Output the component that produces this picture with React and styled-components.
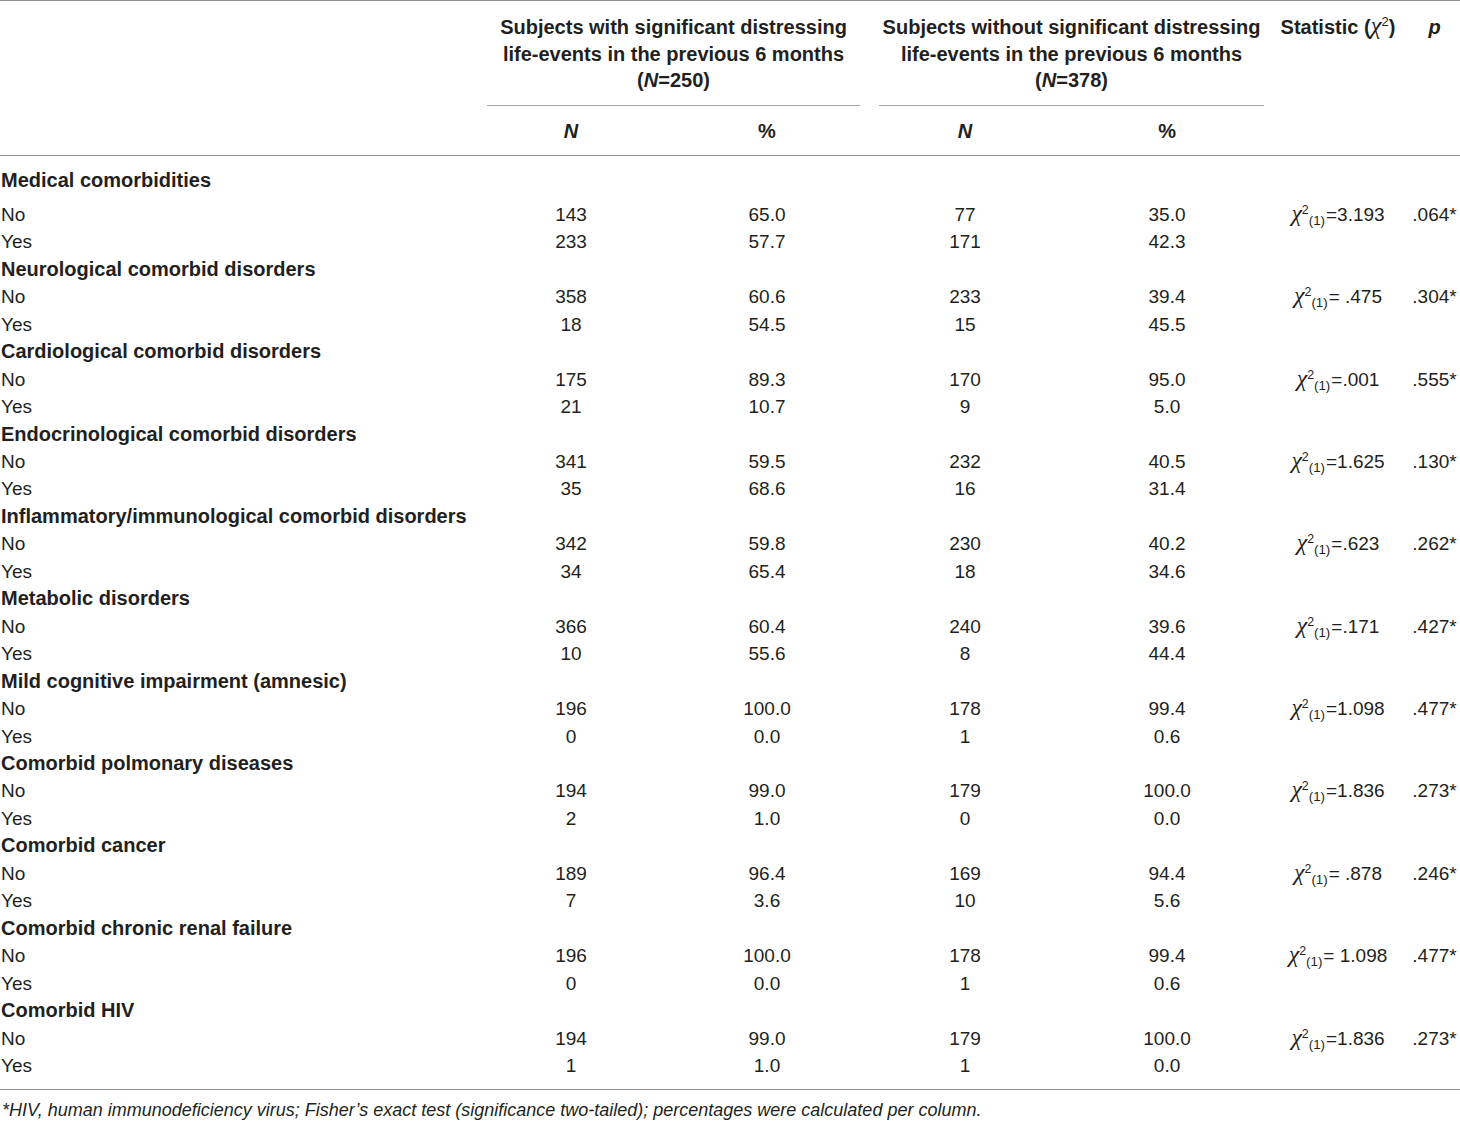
import React from 'react';
import styled, { createGlobalStyle } from 'styled-components';

const GlobalStyle = createGlobalStyle`
  body {
    margin: 0;
    background: #fff;
    font-family: "Liberation Sans", Arial, sans-serif;
    color: #231f20;
  }
`;

const groups = [
  {
    title: 'Medical comorbidities',
    no: ['143', '65.0', '77', '35.0'],
    yes: ['233', '57.7', '171', '42.3'],
    stat: '=3.193',
    p: '.064*',
  },
  {
    title: 'Neurological comorbid disorders',
    no: ['358', '60.6', '233', '39.4'],
    yes: ['18', '54.5', '15', '45.5'],
    stat: '= .475',
    p: '.304*',
  },
  {
    title: 'Cardiological comorbid disorders',
    no: ['175', '89.3', '170', '95.0'],
    yes: ['21', '10.7', '9', '5.0'],
    stat: '=.001',
    p: '.555*',
  },
  {
    title: 'Endocrinological comorbid disorders',
    no: ['341', '59.5', '232', '40.5'],
    yes: ['35', '68.6', '16', '31.4'],
    stat: '=1.625',
    p: '.130*',
  },
  {
    title: 'Inflammatory/immunological comorbid disorders',
    no: ['342', '59.8', '230', '40.2'],
    yes: ['34', '65.4', '18', '34.6'],
    stat: '=.623',
    p: '.262*',
  },
  {
    title: 'Metabolic disorders',
    no: ['366', '60.4', '240', '39.6'],
    yes: ['10', '55.6', '8', '44.4'],
    stat: '=.171',
    p: '.427*',
  },
  {
    title: 'Mild cognitive impairment (amnesic)',
    no: ['196', '100.0', '178', '99.4'],
    yes: ['0', '0.0', '1', '0.6'],
    stat: '=1.098',
    p: '.477*',
  },
  {
    title: 'Comorbid polmonary diseases',
    no: ['194', '99.0', '179', '100.0'],
    yes: ['2', '1.0', '0', '0.0'],
    stat: '=1.836',
    p: '.273*',
  },
  {
    title: 'Comorbid cancer',
    no: ['189', '96.4', '169', '94.4'],
    yes: ['7', '3.6', '10', '5.6'],
    stat: '= .878',
    p: '.246*',
  },
  {
    title: 'Comorbid chronic renal failure',
    no: ['196', '100.0', '178', '99.4'],
    yes: ['0', '0.0', '1', '0.6'],
    stat: '= 1.098',
    p: '.477*',
  },
  {
    title: 'Comorbid HIV',
    no: ['194', '99.0', '179', '100.0'],
    yes: ['1', '1.0', '1', '0.0'],
    stat: '=1.836',
    p: '.273*',
  },
];

const Chi = ({ value }) => (
  <>
    <ChiGlyph>χ</ChiGlyph>
    <Sup>2</Sup>
    {value !== undefined && (
      <>
        <Sub>(1)</Sub>
        {value}
      </>
    )}
  </>
);

const App = () => (
  <Page>
    <GlobalStyle />
    <Table>
      <colgroup>
        <col style={{ width: 479 }} />
        <col style={{ width: 184 }} />
        <col style={{ width: 208 }} />
        <col style={{ width: 188 }} />
        <col style={{ width: 216 }} />
        <col style={{ width: 126 }} />
        <col style={{ width: 59 }} />
      </colgroup>
      <Head>
        <tr>
          <HeadCell rowSpan={2} />
          <GroupHead colSpan={2}>
            <GroupTitle>
              Subjects with significant distressing
              <br />
              life-events in the previous 6 months
              <br />
              (<i>N</i>=250)
            </GroupTitle>
          </GroupHead>
          <GroupHead colSpan={2}>
            <GroupTitle>
              Subjects without significant distressing
              <br />
              life-events in the previous 6 months
              <br />
              (<i>N</i>=378)
            </GroupTitle>
          </GroupHead>
          <HeadCell rowSpan={2}>
            Statistic (<Chi />)
          </HeadCell>
          <HeadCell rowSpan={2} $p>
            <i>p</i>
          </HeadCell>
        </tr>
        <tr>
          <SubHead><i>N</i></SubHead>
          <SubHead>%</SubHead>
          <SubHead><i>N</i></SubHead>
          <SubHead>%</SubHead>
        </tr>
      </Head>
      <Body>
        {groups.map((g, i) => (
          <React.Fragment key={g.title}>
            <tr>
              <Category colSpan={7} $first={i === 0}>{g.title}</Category>
            </tr>
            <tr>
              <Label>No</Label>
              {g.no.map((v, j) => (
                <Num key={j}>{v}</Num>
              ))}
              <Stat><Chi value={g.stat} /></Stat>
              <PValue>{g.p}</PValue>
            </tr>
            <tr>
              <Label $last={i === groups.length - 1}>Yes</Label>
              {g.yes.map((v, j) => (
                <Num key={j} $last={i === groups.length - 1}>{v}</Num>
              ))}
              <Stat $last={i === groups.length - 1} />
              <PValue $last={i === groups.length - 1} />
            </tr>
          </React.Fragment>
        ))}
      </Body>
    </Table>
    <Footnote>
      *HIV, human immunodeficiency virus; Fisher’s exact test (significance two-tailed); percentages were calculated per column.
    </Footnote>
  </Page>
);

// Styled components
const Page = styled.div`
  width: 1460px;
  font-family: "Liberation Sans", Arial, sans-serif;
  color: #231f20;
`;

const Table = styled.table`
  width: 1460px;
  table-layout: fixed;
  border-collapse: collapse;
  border-top: 1px solid #8f8f8f;
  font-size: 19px;
`;

const Head = styled.thead`
  border-bottom: 1px solid #8f8f8f;

  th {
    font-weight: bold;
    font-size: 20px;
    line-height: 26.5px;
  }
`;

const HeadCell = styled.th`
  vertical-align: top;
  padding: 13px 0 0 ${(p) => (p.$p ? '8px' : '0')};
  text-align: center;
  white-space: nowrap;
`;

const GroupHead = styled.th`
  padding: 13px 11px 0 8px;
  text-align: center;
  vertical-align: top;
`;

const GroupTitle = styled.div`
  padding-bottom: 11.5px;
  border-bottom: 1px solid #a6a6a6;
  white-space: nowrap;
`;

const SubHead = styled.th`
  padding: 12px 0 10.5px;
  text-align: center;
`;

const Body = styled.tbody`
  border-bottom: 1px solid #8f8f8f;

  td {
    line-height: 27.45px;
    padding: 0;
  }
`;

const Category = styled.td`
  font-weight: bold;
  font-size: 20px;
  text-align: left;
  && {
    padding: ${(p) => (p.$first ? '10.5px 0 7px 1px' : '0 0 0 1px')};
  }
`;

const Label = styled.td`
  text-align: left;
  && {
    padding: ${(p) => (p.$last ? '0 0 10px 1px' : '0 0 0 1px')};
  }
`;

const Num = styled.td`
  text-align: center;
  && {
    padding-bottom: ${(p) => (p.$last ? '10px' : '0')};
  }
`;

const Stat = styled.td`
  text-align: center;
  white-space: nowrap;
  && {
    padding-bottom: ${(p) => (p.$last ? '10px' : '0')};
  }
`;

const PValue = styled.td`
  text-align: center;
  && {
    padding: 0 0 ${(p) => (p.$last ? '10px' : '0')} 8px;
  }
`;

const ChiGlyph = styled.span`
  font-family: "Liberation Serif", "DejaVu Serif", serif;
  font-style: italic;
  font-weight: normal;
  font-size: 1.25em;
  line-height: 0;
`;

const Sup = styled.sup`
  font-size: 0.65em;
  line-height: 0;
  vertical-align: 0.6em;
  font-weight: normal;
`;

const Sub = styled.sub`
  font-size: 0.7em;
  line-height: 0;
  vertical-align: -0.3em;
  margin-right: 1px;
`;

const Footnote = styled.p`
  margin: 10px 0 0 2px;
  font-size: 18px;
  line-height: 20px;
  font-style: italic;
`;

export default App;
